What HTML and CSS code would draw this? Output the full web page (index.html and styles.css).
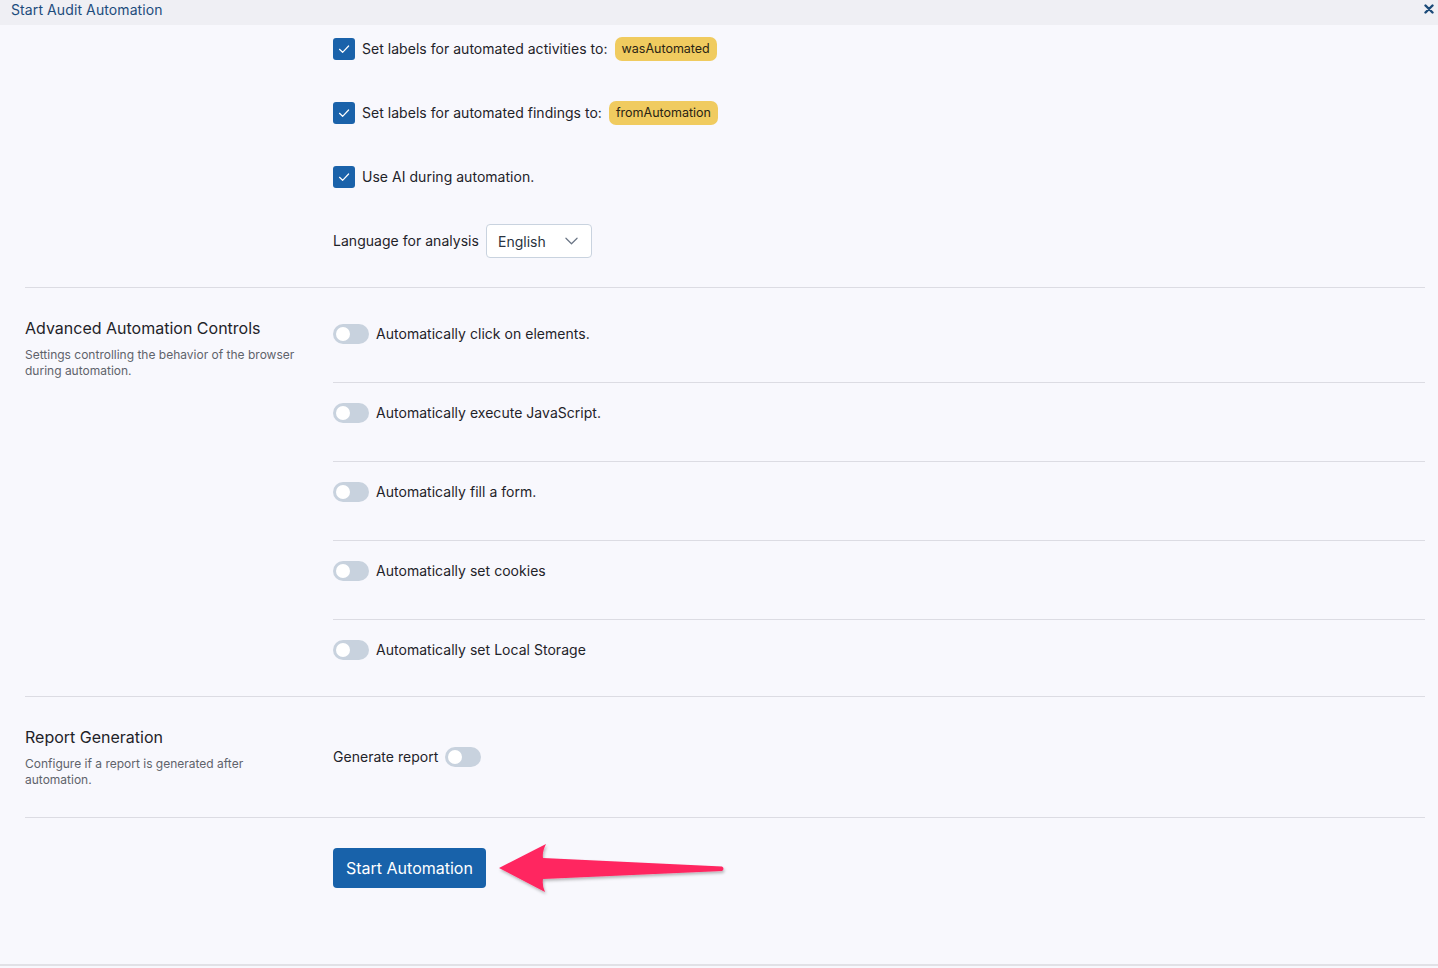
FILE: index.html
```html
<!DOCTYPE html>
<html lang="en">
<head>
<meta charset="utf-8">
<title>Start Audit Automation</title>
<link rel="stylesheet" href="styles.css">
</head>
<body>
<div class="window">
  <header class="titlebar">
    <span class="title">Start Audit Automation</span>
    <svg class="close" viewBox="0 0 10 10" width="10" height="10"><path d="M1.5 1.5 L8.5 8.5 M8.5 1.5 L1.5 8.5" stroke="#1b4a78" stroke-width="2.4" stroke-linecap="round"/></svg>
  </header>
  <main class="content">
    <section class="section section-top">
      <div class="side"></div>
      <div class="main">
        <div class="check-row">
          <span class="checkbox"><svg viewBox="0 0 22 22" width="22" height="22"><path d="M6.5 11.3 L9.6 14.3 L15.6 8" fill="none" stroke="#fff" stroke-width="1.2" stroke-linecap="round" stroke-linejoin="round"/></svg></span>
          <span class="label">Set labels for automated activities to:</span>
          <span class="badge">wasAutomated</span>
        </div>
        <div class="check-row">
          <span class="checkbox"><svg viewBox="0 0 22 22" width="22" height="22"><path d="M6.5 11.3 L9.6 14.3 L15.6 8" fill="none" stroke="#fff" stroke-width="1.2" stroke-linecap="round" stroke-linejoin="round"/></svg></span>
          <span class="label">Set labels for automated findings to:</span>
          <span class="badge">fromAutomation</span>
        </div>
        <div class="check-row">
          <span class="checkbox"><svg viewBox="0 0 22 22" width="22" height="22"><path d="M6.5 11.3 L9.6 14.3 L15.6 8" fill="none" stroke="#fff" stroke-width="1.2" stroke-linecap="round" stroke-linejoin="round"/></svg></span>
          <span class="label">Use AI during automation.</span>
        </div>
        <div class="check-row">
          <span class="label">Language for analysis</span>
          <span class="select">
            <span class="select-value">English</span>
            <svg viewBox="0 0 14 8" width="13" height="8"><path d="M1 1 L7 7 L13 1" fill="none" stroke="#6a7585" stroke-width="1.3" stroke-linecap="round" stroke-linejoin="round"/></svg>
          </span>
        </div>
      </div>
    </section>

    <section class="section section-advanced">
      <div class="side">
        <h2 class="side-title">Advanced Automation Controls</h2>
        <p class="side-desc">Settings controlling the behavior of the browser during automation.</p>
      </div>
      <div class="main">
        <div class="toggle-row"><span class="toggle"><span class="knob"></span></span><span class="label">Automatically click on elements.</span></div>
        <div class="toggle-row"><span class="toggle"><span class="knob"></span></span><span class="label">Automatically execute JavaScript.</span></div>
        <div class="toggle-row"><span class="toggle"><span class="knob"></span></span><span class="label">Automatically fill a form.</span></div>
        <div class="toggle-row"><span class="toggle"><span class="knob"></span></span><span class="label">Automatically set cookies</span></div>
        <div class="toggle-row"><span class="toggle"><span class="knob"></span></span><span class="label">Automatically set Local Storage</span></div>
      </div>
    </section>

    <section class="section section-report">
      <div class="side">
        <h2 class="side-title">Report Generation</h2>
        <p class="side-desc">Configure if a report is generated after automation.</p>
      </div>
      <div class="main report-main">
        <span class="label">Generate report</span>
        <span class="toggle"><span class="knob"></span></span>
      </div>
    </section>

    <section class="section section-actions">
      <div class="side"></div>
      <div class="main">
        <button class="primary">Start Automation</button>
      </div>
    </section>

    <svg class="arrow" viewBox="0 0 240 60" width="240" height="60">
      <defs>
        <filter id="sh" x="-10%" y="-30%" width="120%" height="160%">
          <feDropShadow dx="1" dy="2" stdDeviation="1.6" flood-color="#000" flood-opacity="0.28"/>
        </filter>
      </defs>
      <path d="M9 30 L56 6 Q52 14 53 20 L232 28.5 Q235 30.5 232 33 L53 41 Q52 48 55 54 Z" fill="#ff2560" filter="url(#sh)"/>
    </svg>
  </main>
</div>
</body>
</html>
```

FILE: styles.css
```css
* { box-sizing: border-box; }

html, body {
  margin: 0;
  padding: 0;
}

body {
  font-family: Inter, "Noto Sans", "Liberation Sans", sans-serif;
  color: #1f2329;
  background: #f8f8fd;
  width: 1438px;
  height: 968px;
  overflow: hidden;
}

.window {
  height: 966px;
  border-bottom: 2px solid #e1e1e6;
  display: flex;
  flex-direction: column;
}

.titlebar {
  height: 25px;
  background: #efeff4;
  display: flex;
  align-items: flex-start;
  justify-content: space-between;
  padding: 0 4px 0 11px;
}

.title {
  font-size: 14px;
  color: #1d4c7c;
  line-height: 19px;
  letter-spacing: 0.1px;
}

.close {
  display: block;
  margin-top: 4px;
}

.content {
  position: relative;
  flex: 1;
  padding: 0 13px 0 25px;
}

.section {
  display: grid;
  grid-template-columns: 308px 1fr;
  border-bottom: 1px solid #dcdce3;
}

.section-actions {
  border-bottom: none;
}

.side-title {
  margin: 0;
  font-size: 16px;
  font-weight: 400;
  line-height: 20px;
  color: #1f2329;
}

.side-desc {
  margin: 9px 0 0;
  font-size: 12px;
  line-height: 16px;
  color: #5f636b;
  max-width: 280px;
}

.label {
  font-size: 14px;
  line-height: 20px;
  white-space: nowrap;
  letter-spacing: 0.03px;
}

/* Top section */
.section-top {
  padding: 4px 0 26px;
}

.section-top .main {
  display: flex;
  flex-direction: column;
  gap: 24px;
}

.check-row {
  height: 40px;
  display: flex;
  align-items: center;
  gap: 7px;
}

.checkbox {
  width: 22px;
  height: 22px;
  border-radius: 3px;
  background: #1a62aa;
  display: inline-block;
  flex: none;
}

.checkbox svg { display: block; }

.badge {
  background: #f0cb5f;
  color: #2a2414;
  font-size: 12.5px;
  line-height: 24px;
  height: 24px;
  padding: 0 7px;
  border-radius: 7px;
}

.select {
  width: 106px;
  height: 34px;
  border: 1px solid #c9d3df;
  border-radius: 4px;
  background: #ffffff;
  display: flex;
  align-items: center;
  justify-content: space-between;
  padding: 0 13px 0 11px;
}

.select-value {
  font-size: 14px;
  color: #2a3340;
}

/* Advanced section */
.section-advanced {
  padding-top: 16px;
}

.section-advanced .side {
  padding-top: 14px;
}

.toggle-row {
  display: flex;
  align-items: center;
  gap: 7px;
  padding: 20px 0 38px;
  height: 79px;
  border-bottom: 1px solid #dcdce3;
}

.toggle-row:last-child {
  border-bottom: none;
  height: 76px;
  padding-bottom: 36px;
}

.toggle {
  width: 36px;
  height: 20px;
  border-radius: 10px;
  background: #c8d2de;
  display: inline-flex;
  align-items: center;
  padding: 0 3px;
  flex: none;
}

.knob {
  width: 14px;
  height: 14px;
  border-radius: 50%;
  background: #ffffff;
}

/* Report section */
.section-report {
  height: 121px;
  align-items: center;
}

.report-main {
  display: flex;
  align-items: center;
  gap: 7px;
}

/* Actions */
.section-actions {
  padding-top: 30px;
}

.primary {
  font-family: inherit;
  font-size: 16px;
  line-height: 20px;
  color: #ffffff;
  background: #1862aa;
  border: none;
  border-radius: 4px;
  height: 40px;
  padding: 0 13px;
  cursor: pointer;
}

/* Annotation arrow overlay */
.arrow {
  position: absolute;
  left: 490px;
  top: 813px;
}
```
